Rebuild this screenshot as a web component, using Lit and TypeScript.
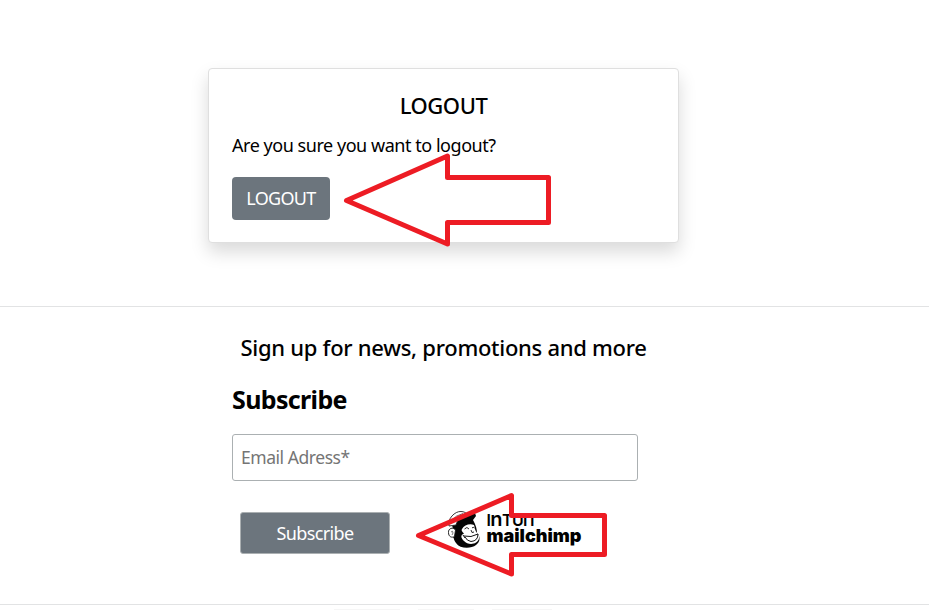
import { LitElement, html, css } from "lit";
import { customElement } from "lit/decorators.js";

@customElement("app-root")
export class AppRoot extends LitElement {
  static styles = css`
    :host {
      display: block;
      position: relative;
      width: 929px;
      height: 610px;
      overflow: hidden;
      background: #fff;
      color: #000;
      font-family: "Noto Sans", "Open Sans", sans-serif;
    }
    * { box-sizing: border-box; }
    h1, h2, h3, p { margin: 0; white-space: nowrap; }
    .logout { height: 307px; padding: 68px 0 0 208px; border-bottom: 1px solid #e2e3e4; }
    .card {
      width: 471px;
      height: 175px;
      padding: 22px 23px 0;
      border: 1px solid #dfdfdf;
      border-radius: 4px;
      background: #fff;
      box-shadow: 0 9px 18px rgba(0, 0, 0, 0.15);
    }
    .title { height: 28px; line-height: 28px; text-align: center; font-size: 22px; font-weight: 500; letter-spacing: -0.45px; }
    .question { height: 28px; line-height: 28px; margin-top: 12px; font-size: 18px; letter-spacing: -0.46px; }
    button { display: block; margin: 0; padding: 0 0 2px; font: inherit; color: #fff; background: #6c757d; border: 0; }
    .out { width: 98px; height: 43px; margin-top: 18px; border-radius: 4px; font-size: 18px; letter-spacing: -0.7px; }
    .signup { height: 298px; padding: 24px 0 0 232px; border-bottom: 1px solid #e2e3e4; }
    .lead { padding-left: 8.5px; height: 32px; line-height: 32px; font-size: 22px; font-weight: 500; letter-spacing: -0.28px; }
    .sub { margin-top: 19px; height: 34px; line-height: 34px; font-size: 25px; font-weight: 700; letter-spacing: -0.65px; }
    .email {
      display: block;
      width: 406px;
      height: 47px;
      margin: 18px 0 0;
      padding: 0 8px 2px;
      border: 1px solid #abb0b2;
      border-radius: 3px;
      background: #fff;
      font: inherit;
      font-size: 17.5px;
      letter-spacing: -0.45px;
    }
    .email::placeholder { color: #757575; opacity: 1; }
    .actions { display: flex; padding: 31px 0 0 8px; }
    .send { width: 150px; height: 42px; padding-bottom: 0; border: 1px solid #abb0b2; border-radius: 3px; font-size: 18px; letter-spacing: -0.6px; }
    .brand { display: block; margin: -8px 0 0 54px; overflow: visible; }
    .footer { display: flex; gap: 18px; padding: 4px 0 0 334px; }
    .tab { height: 1px; background: #f6f6f6; width: 60px; }
    .tab:first-child { width: 66px; }
    .tab:nth-child(2) { width: 56px; }
    .arrows { position: absolute; inset: 0; pointer-events: none; }
  `;

  render() {
    return html`
      <section class="logout">
        <div class="card">
          <h3 class="title">LOGOUT</h3>
          <p class="question">Are you sure you want to logout?</p>
          <button class="out">LOGOUT</button>
        </div>
      </section>
      <section class="signup">
        <h3 class="lead">Sign up for news, promotions and more</h3>
        <h2 class="sub">Subscribe</h2>
        <input class="email" placeholder="Email Adress*" />
        <div class="actions">
          <button class="send">Subscribe</button>
          <svg class="brand" width="142" height="47" viewBox="444 504 142 47">
            <path d="M452 525C454 518 460 514 465 514C469 512 472 514 475 513L476 516L473 520C476 525 477 530 477 533C481 537 480 542 476 545C471 549 460 549 456 543C454 541 454 538 453 537L453 529Z" fill="#050505"/>
            <path d="M449 526C447 519 455 511 461 511.500C464 511.500 466 513 467 514C461 515 458 519 456 525C454 525 451 526 449 526Z" fill="#fff" stroke="#222" stroke-width=".9"/>
            <path d="M451 521Q456 515 463 513.500" fill="none" stroke="#333" stroke-width=".7"/>
            <path d="M455.500 530C453 526.500 448 528.500 448.500 532.500C448.500 537 452 538 454.500 536.500Z" fill="#fff" stroke="#111" stroke-width=".9"/>
            <path d="M451 532Q453 530 453 533L452 535" fill="none" stroke="#555" stroke-width=".8"/>
            <path d="M462 529C464 525 470 523 474 525C475 528 475 531 477 533C480 535 480 540 476 542.500C472 545 467 544 464 541C461 538 460 535 464 533.500C462 532 461 530 462 529Z" fill="#fff"/>
            <path d="M464.500 529Q467 526 469 529M472 528Q473 526.500 474.500 528M471 530L472 532.500L474 532" fill="none" stroke="#111" stroke-width=".9"/>
            <path d="M464 536Q471 538 478 534Q478 541 471 541.500Q467 541 465 537M463 535L465 538" fill="none" stroke="#111" stroke-width="1"/>
            <text x="486.500" y="526" font-family="Inter, sans-serif" font-weight="600" font-size="16" textLength="51" lengthAdjust="spacing">I<tspan font-size="20">n</tspan>TUIT</text>
            <text x="486.500" y="541.500" font-family="Inter, sans-serif" font-weight="900" font-size="18" textLength="95" lengthAdjust="spacingAndGlyphs">mailchimp</text>
          </svg>
        </div>
      </section>
      <div class="footer"><i class="tab"></i><i class="tab"></i><i class="tab"></i></div>
      <svg class="arrows" width="929" height="610" fill="none" stroke="#ed1c24" stroke-width="5" stroke-linejoin="round">
        <path d="M346.5 200.5L447.5 156V177.5H548.5V222.5H447.5V244Z"/>
        <path d="M418.5 535.5L511.5 495.5V515.5H604.5V554.5H511.5V574Z"/>
      </svg>
    `;
  }
}
